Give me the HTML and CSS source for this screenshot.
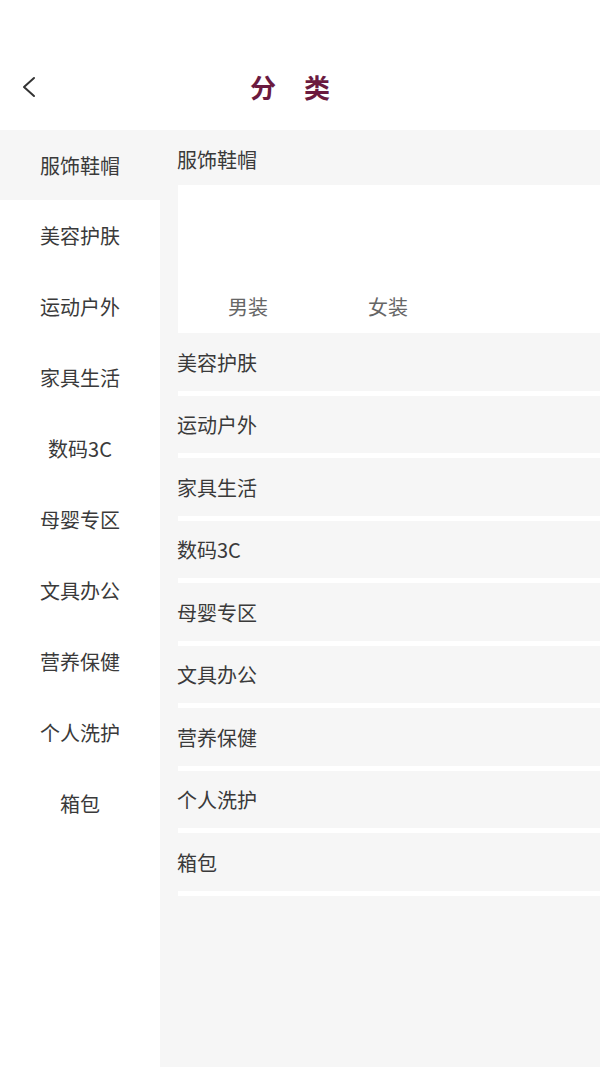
FILE: index.html
```html
<!DOCTYPE html>
<html lang="zh-CN">
<head>
<meta charset="utf-8">
<title>分类</title>
<link rel="stylesheet" href="styles.css">
</head>
<body>
<div class="page">
  <header class="topbar">
    <span class="back">
      <svg width="16" height="24" viewBox="0 0 16 24"><path d="M13 3 L3 12 L13 21" fill="none" stroke="#333" stroke-width="2" stroke-linecap="round" stroke-linejoin="round"/></svg>
    </span>
    <h1 class="title">分类</h1>
  </header>
  <main class="body">
    <nav class="side">
      <div class="side-item active">服饰鞋帽</div>
      <div class="side-item">美容护肤</div>
      <div class="side-item">运动户外</div>
      <div class="side-item">家具生活</div>
      <div class="side-item">数码3C</div>
      <div class="side-item">母婴专区</div>
      <div class="side-item">文具办公</div>
      <div class="side-item">营养保健</div>
      <div class="side-item">个人洗护</div>
      <div class="side-item">箱包</div>
    </nav>
    <section class="panel">
      <div class="sec-head">服饰鞋帽</div>
      <div class="sub-box">
        <div class="sub-item">男装</div>
        <div class="sub-item">女装</div>
      </div>
      <div class="row">美容护肤</div>
      <div class="row">运动户外</div>
      <div class="row">家具生活</div>
      <div class="row">数码3C</div>
      <div class="row">母婴专区</div>
      <div class="row">文具办公</div>
      <div class="row">营养保健</div>
      <div class="row">个人洗护</div>
      <div class="row">箱包</div>
    </section>
  </main>
</div>
</body>
</html>
```
FILE: styles.css
```css
html, body {
  margin: 0;
  padding: 0;
  background: #ffffff;
}
body {
  font-family: "Noto Sans CJK SC", "Noto Sans", sans-serif;
  color: #333333;
}
.page {
  width: 600px;
  height: 1067px;
  display: flex;
  flex-direction: column;
  overflow: hidden;
}
.topbar {
  height: 130px;
  flex: none;
  display: flex;
  align-items: center;
  box-sizing: border-box;
  padding-top: 44px;
}
.back {
  width: 16px;
  height: 24px;
  margin-left: 21px;
  flex: none;
}
.back svg { display: block; }
.title {
  flex: 1;
  margin: 0;
  text-align: center;
  font-size: 26px;
  font-weight: 700;
  color: #6b1a3f;
  letter-spacing: 28px;
  padding-right: 29px;
  line-height: 34px;
}
.body {
  flex: 1;
  display: flex;
}
.side {
  width: 160px;
  flex: none;
  background: #ffffff;
}
.side-item {
  height: 71px;
  display: flex;
  align-items: center;
  justify-content: center;
  font-size: 20px;
  color: #3a3a3a;
}
.side-item.active {
  background: #f6f6f6;
  height: 70px;
}
.panel {
  flex: 1;
  background: #f6f6f6;
  display: flex;
  flex-direction: column;
}
.sec-head {
  height: 55px;
  display: flex;
  align-items: center;
  padding-left: 17px;
  padding-top: 4px;
  font-size: 20px;
  color: #3a3a3a;
  box-sizing: border-box;
}
.sub-box {
  margin-left: 18px;
  height: 148px;
  background: #ffffff;
  display: grid;
  grid-template-columns: 140px 140px;
  align-content: end;
  padding-bottom: 14px;
  box-sizing: border-box;
}
.sub-item {
  text-align: center;
  font-size: 20px;
  color: #666666;
  line-height: 24px;
}
.row {
  height: 62.5px;
  display: flex;
  align-items: center;
  padding-left: 17px;
  padding-top: 1px;
  box-sizing: border-box;
  font-size: 20px;
  color: #3a3a3a;
  border-bottom: 5.5px solid #ffffff;
  position: relative;
}
.row::after {
  content: "";
  position: absolute;
  left: 0;
  width: 18px;
  bottom: -5.5px;
  height: 5.5px;
  background: #f6f6f6;
}
```
